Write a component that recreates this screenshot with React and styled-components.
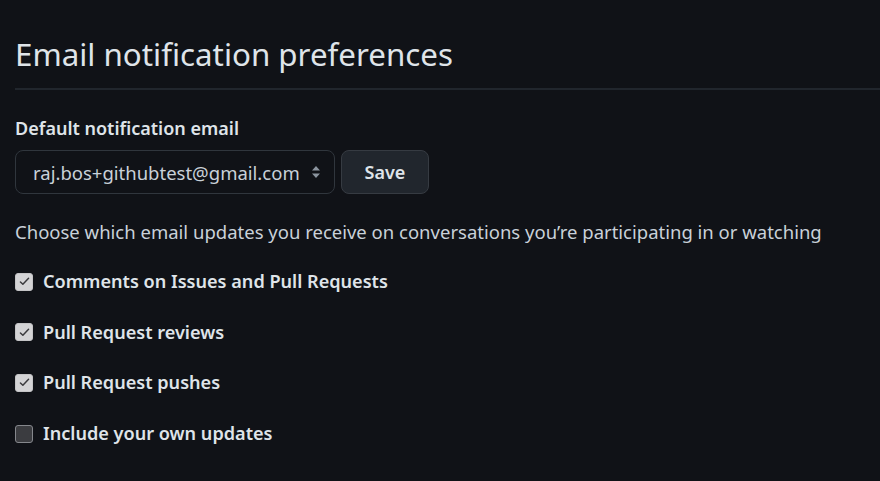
import React from "react"
import styled, { createGlobalStyle } from "styled-components"

const GlobalStyle = createGlobalStyle`
  html, body {
    margin: 0;
    padding: 0;
    background: #101217;
  }
  body {
    font-family: "Noto Sans", "Open Sans", sans-serif;
    color: #c9d1d9;
  }
`

const Page = styled.div`
  width: 880px;
  height: 481px;
  overflow: hidden;
  background: #101217;
  padding-left: 15px;
  box-sizing: border-box;
`

const Title = styled.h1`
  margin: 0;
  padding-top: 31px;
  padding-bottom: 11px;
  font-size: 31.3px;
  font-weight: 400;
  line-height: 46px;
  color: #dfe4e9;
  border-bottom: 2px solid #21262d;
`

const Label = styled.div`
  margin-top: 26px;
  font-size: 18px;
  font-weight: 600;
  line-height: 24px;
  color: #dfe4e9;
`

const FormRow = styled.div`
  display: flex;
  gap: 6px;
  margin-top: 10px;
`

const Select = styled.div`
  width: 320px;
  height: 44px;
  box-sizing: border-box;
  display: flex;
  align-items: center;
  justify-content: space-between;
  padding: 0 12px 0 17px;
  border: 1px solid #30363d;
  border-radius: 8px;
  background: #101217;
  font-size: 18.5px;
  color: #c9d1d9;
`

const Arrows = styled.svg`
  width: 12px;
  height: 16px;
  flex: none;
`

const Button = styled.button`
  width: 88px;
  height: 44px;
  box-sizing: border-box;
  border: 1px solid #363b42;
  border-radius: 8px;
  background: #21262d;
  color: #dfe4e9;
  font-family: inherit;
  font-size: 18px;
  font-weight: 600;
`

const Description = styled.p`
  margin: 25px 0 0;
  font-size: 18.5px;
  line-height: 26px;
  color: #c9d1d9;
`

const List = styled.div`
  margin-top: 24px;
  display: flex;
  flex-direction: column;
  gap: 25.7px;
`

const Row = styled.label`
  display: flex;
  align-items: center;
  gap: 10px;
  font-size: 18.1px;
  font-weight: 600;
  line-height: 25px;
  color: #dfe4e9;
`

const Box = styled.span`
  width: 18px;
  height: 18px;
  box-sizing: border-box;
  border-radius: 3px;
  display: flex;
  align-items: center;
  justify-content: center;
  background: ${({ $checked }) => ($checked ? "#d4d4d6" : "#3b3c40")};
  border: 1px solid ${({ $checked }) => ($checked ? "#c4c4c6" : "#85878c")};
`

const Check = styled.svg`
  width: 13px;
  height: 13px;
`

const Checkbox = ({ checked, children }) => (
  <Row>
    <Box $checked={checked}>
      {checked && (
        <Check viewBox="0 0 16 16">
          <path d="M3 8.5l3 3 7-7.5" fill="none" stroke="#3a3a3d" strokeWidth="1.8" strokeLinecap="round" strokeLinejoin="round" />
        </Check>
      )}
    </Box>
    {children}
  </Row>
)

export default function App() {
  return (
    <>
      <GlobalStyle />
      <Page>
        <Title>Email notification preferences</Title>
        <Label>Default notification email</Label>
        <FormRow>
          <Select>
            raj.bos+githubtest@gmail.com
            <Arrows viewBox="0 0 12 16">
              <path d="M6 2l4 4.5H2z M6 14l4-4.5H2z" fill="#8b949e" />
            </Arrows>
          </Select>
          <Button>Save</Button>
        </FormRow>
        <Description>
          Choose which email updates you receive on conversations you’re participating in or watching
        </Description>
        <List>
          <Checkbox checked>Comments on Issues and Pull Requests</Checkbox>
          <Checkbox checked>Pull Request reviews</Checkbox>
          <Checkbox checked>Pull Request pushes</Checkbox>
          <Checkbox>Include your own updates</Checkbox>
        </List>
      </Page>
    </>
  )
}
